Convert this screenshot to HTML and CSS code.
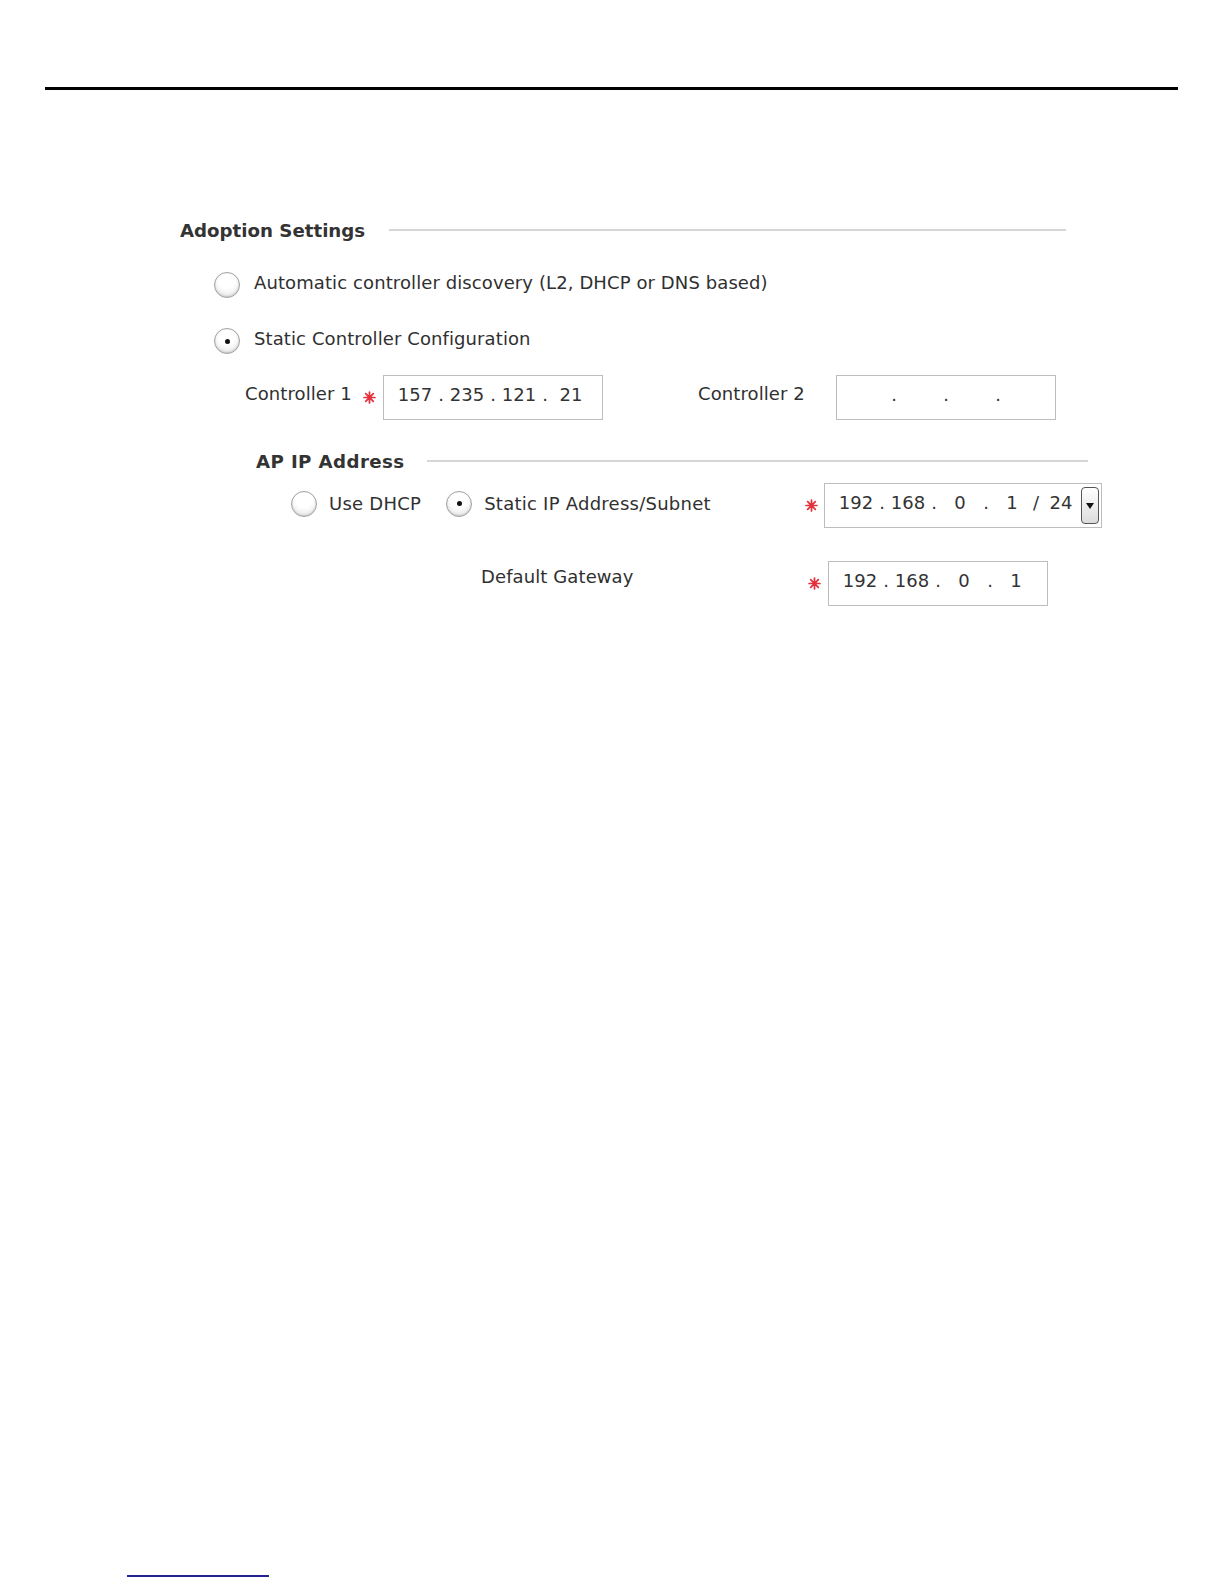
FILE: index.html
```html
<!DOCTYPE html>
<html lang="en">

<head>
    <meta charset="UTF-8">
    <title>Adoption Settings</title>
    <link rel="stylesheet" href="styles.css">
</head>

<body>
    <div class="page-rule"></div>

    <section class="adoption">
        <div class="legend">
            <span class="legend-title">Adoption Settings</span>
            <i class="legend-line"></i>
        </div>

        <label class="opt first"><span class="radio"></span><span class="opt-text">Automatic controller discovery (L2, DHCP or DNS based)</span></label>
        <label class="opt second"><span class="radio on"></span><span class="opt-text">Static Controller Configuration</span></label>

        <div class="ctl-row">
            <span class="ctl-label">Controller 1</span>
            <svg class="req" viewBox="0 0 12 12" width="13" height="13"><path d="M6 1v10M1 6h10M2.5 2.5l7 7M9.5 2.5l-7 7"/></svg>
            <div class="ip">
                <span class="octet">157</span><span class="dot">.</span>
                <span class="octet">235</span><span class="dot">.</span>
                <span class="octet">121</span><span class="dot">.</span>
                <span class="octet">21</span>
            </div>

            <span class="ctl-label second">Controller 2</span>
            <div class="ip">
                <span class="octet"></span><span class="dot">.</span>
                <span class="octet"></span><span class="dot">.</span>
                <span class="octet"></span><span class="dot">.</span>
                <span class="octet"></span>
            </div>
        </div>

        <div class="ap">
            <div class="legend short">
                <span class="legend-title">AP IP Address</span>
                <i class="legend-line"></i>
            </div>

            <div class="ap-row">
                <span class="radio"></span><span class="choice">Use DHCP</span>
                <span class="radio on next"></span><span class="choice">Static IP Address/Subnet</span>
                <svg class="req push" viewBox="0 0 12 12" width="13" height="13"><path d="M6 1v10M1 6h10M2.5 2.5l7 7M9.5 2.5l-7 7"/></svg>
                <div class="ip ip-mask">
                    <span class="octet">192</span><span class="dot">.</span>
                    <span class="octet">168</span><span class="dot">.</span>
                    <span class="octet">0</span><span class="dot">.</span>
                    <span class="octet">1</span>
                    <span class="slash">/</span>
                    <span class="mask">24</span>
                    <span class="drop"><svg viewBox="0 0 8 6" width="8" height="6"><path d="M0 0h8L4 6z"/></svg></span>
                </div>
            </div>

            <div class="gw-row">
                <span class="gw-label">Default Gateway</span>
                <svg class="req" viewBox="0 0 12 12" width="13" height="13"><path d="M6 1v10M1 6h10M2.5 2.5l7 7M9.5 2.5l-7 7"/></svg>
                <div class="ip">
                    <span class="octet">192</span><span class="dot">.</span>
                    <span class="octet">168</span><span class="dot">.</span>
                    <span class="octet">0</span><span class="dot">.</span>
                    <span class="octet">1</span>
                </div>
            </div>
        </div>
    </section>

    <div class="foot-rule"></div>
</body>

</html>
```

FILE: styles.css
```css
body {
    margin: 0;
    font-family: "DejaVu Sans", sans-serif;
    font-size: 18px;
    letter-spacing: 0.1px;
    color: #303030;
}

.page-rule {
    width: 1133px;
    height: 3px;
    margin: 87px 0 0 45px;
    background: #000;
}

.adoption {
    margin-top: 128px;
    padding-left: 180px;
}

.legend {
    display: flex;
    align-items: center;
    width: 886px;
    height: 24px;
}

.legend.short {
    width: 832px;
}

.legend-title {
    margin-right: 24px;
    font-size: 18.2px;
    font-weight: bold;
    letter-spacing: 0;
    color: #333;
    white-space: nowrap;
}

.legend.short .legend-title {
    letter-spacing: 0.4px;
    margin-right: 23px;
}

.legend-line {
    flex: 1;
    height: 2px;
    background: #d6d6d6;
}

.opt {
    display: flex;
    align-items: center;
    gap: 14px;
    height: 30px;
    margin-top: 24px;
    padding-left: 34px;
}

.opt.first {
    margin-top: 28px;
}

.opt.second {
    margin-top: 26px;
}

.opt-text {
    padding-bottom: 5px;
}

.radio {
    display: flex;
    align-items: center;
    justify-content: center;
    flex: none;
    width: 24px;
    height: 24px;
    border: 1px solid #a0a0a0;
    border-radius: 50%;
    background: radial-gradient(circle at 50% 30%, #fff 40%, #dedede 100%);
    box-shadow: inset 0 -1px 2px rgba(0, 0, 0, 0.15);
}

.radio.on::after {
    content: "";
    width: 5px;
    height: 5px;
    border-radius: 50%;
    background: #111;
}

.req {
    flex: none;
    margin-right: 7px;
    stroke: #e3303c;
    stroke-width: 1.6;
    stroke-linecap: round;
}

.ctl-row {
    display: flex;
    align-items: center;
    margin-top: 19px;
    padding-left: 65px;
}

.ctl-label {
    width: 118px;
    padding-bottom: 8px;
}

.ctl-label.second {
    width: 138px;
    margin-left: 95px;
}

.ip {
    display: flex;
    align-items: center;
    box-sizing: border-box;
    width: 220px;
    height: 45px;
    padding: 0 0 6px 12px;
    border: 1px solid #bdbdbd;
    color: #333;
    letter-spacing: 0;
}

.octet {
    width: 38px;
    text-align: center;
}

.dot {
    width: 14px;
    text-align: center;
}

.ap {
    margin-top: 29px;
    padding-left: 76px;
}

.ap-row {
    display: flex;
    align-items: center;
    width: 811px;
    height: 45px;
    margin: 10px 0 0 35px;
}

.ap-row .radio,
.ap-row .choice {
    margin-bottom: 4px;
}

.choice {
    margin-left: 12px;
    letter-spacing: 0.25px;
}

.radio.next {
    margin-left: 25px;
}

.req.push {
    margin-left: auto;
    margin-right: 6px;
}

.ip-mask {
    width: 278px;
}

.slash {
    width: 10px;
    text-align: center;
}

.mask {
    width: 40px;
    text-align: center;
}

.drop {
    display: flex;
    align-items: center;
    justify-content: center;
    box-sizing: border-box;
    width: 18px;
    height: 37px;
    margin-top: 6px;
    border: 1px solid #555;
    border-radius: 4px;
    background: linear-gradient(#fff, #dcdcdc);
}

.drop svg {
    fill: #111;
}

.gw-row {
    display: flex;
    align-items: center;
    height: 45px;
    margin-top: 33px;
    padding-left: 225px;
}

.gw-label {
    width: 327px;
    padding-bottom: 14px;
}

.foot-rule {
    width: 142px;
    height: 2px;
    margin: 969px 0 0 127px;
    background: #23238e;
}
```
